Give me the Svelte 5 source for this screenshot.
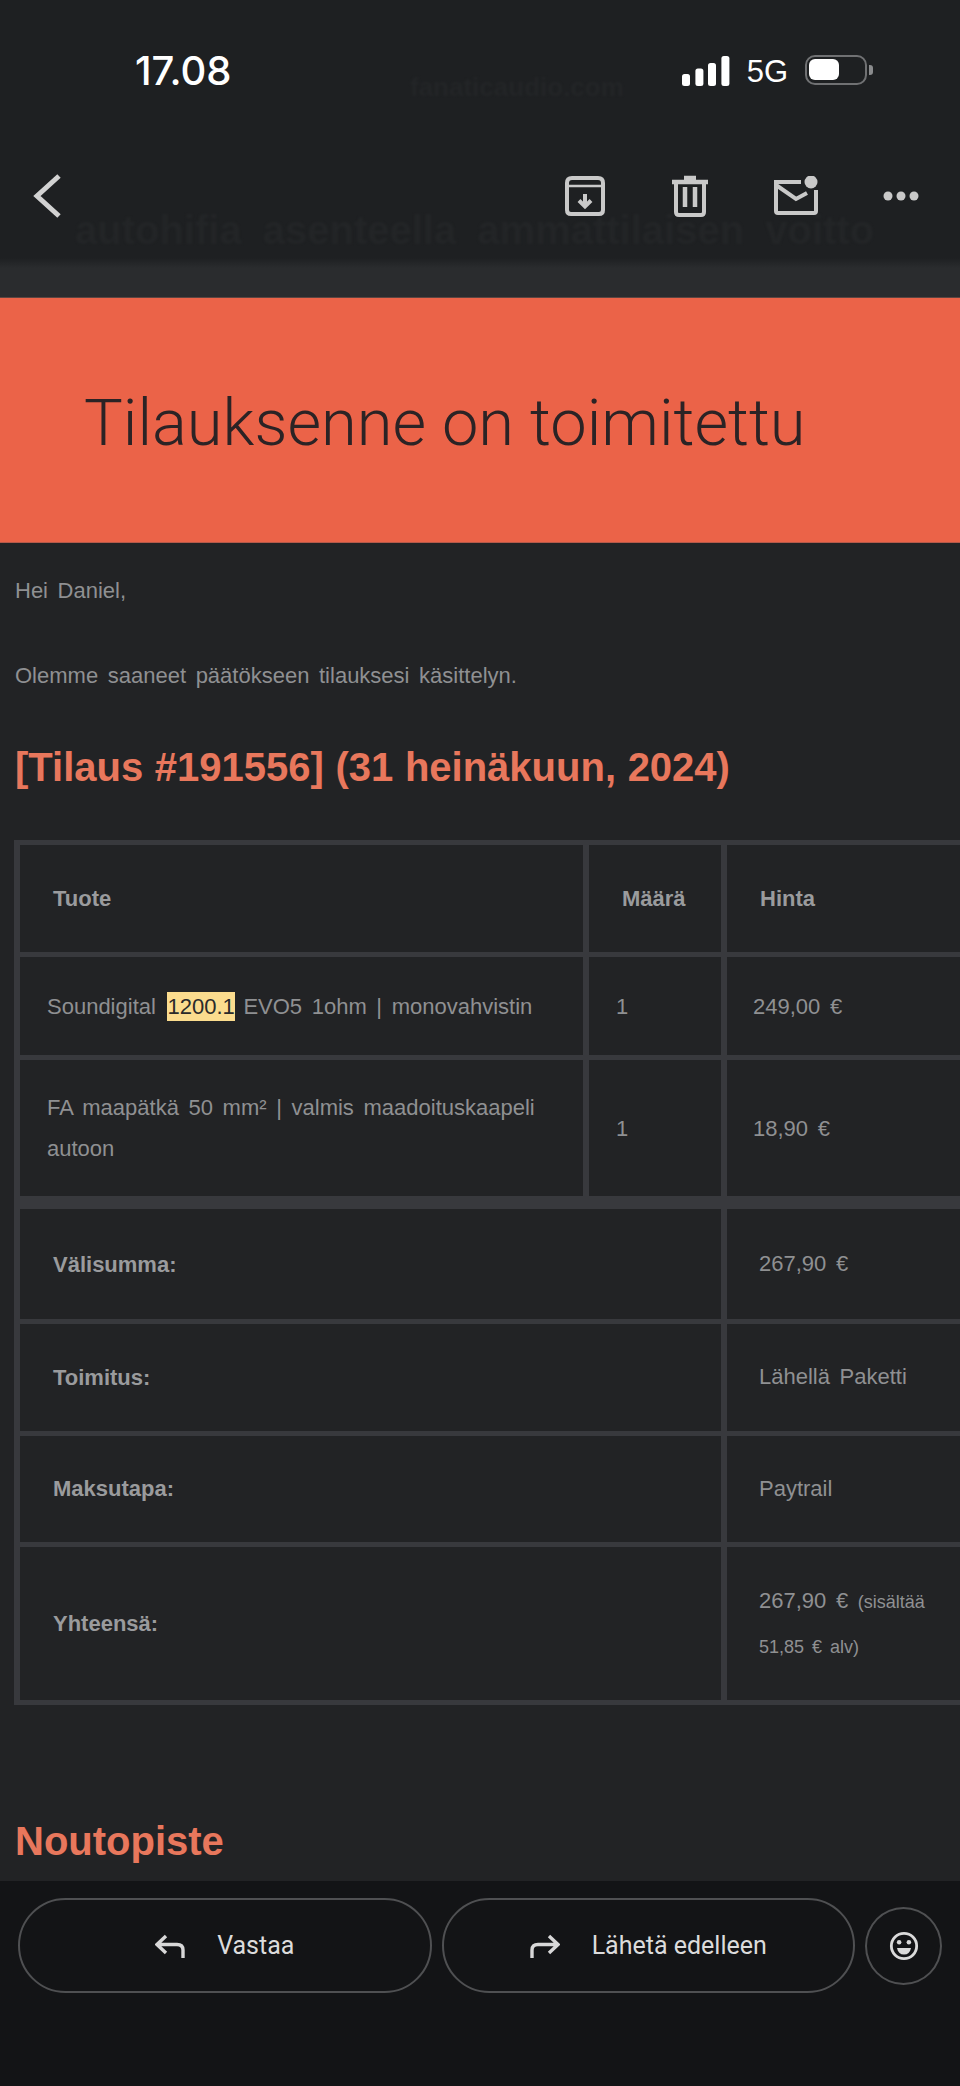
<script>
  const items = [
    { name: 'Soundigital', hit: '1200.1', rest: 'EVO5 1ohm | monovahvistin', qty: 1, price: '249,00 €' },
    { name: 'FA maapätkä 50 mm² | valmis maadoituskaapeli autoon', qty: 1, price: '18,90 €' }
  ]
  const totals = [
    { label: 'Välisumma:', value: '267,90 €' },
    { label: 'Toimitus:', value: 'Lähellä Paketti' },
    { label: 'Maksutapa:', value: 'Paytrail' }
  ]
</script>

<div class="phone">
  <header class="top">
    <div class="ghost">
      <span class="ghost-site">fanaticaudio.com</span>
      <span class="ghost-line">autohifia asenteella ammattilaisen voitto</span>
    </div>
    <div class="status">
      <span class="time">17.08</span>
      <div class="status-right">
        <svg class="signal" width="48" height="30" viewBox="0 0 48 30" fill="#fff">
          <rect x="0" y="18" width="8" height="12" rx="2.5" />
          <rect x="13.4" y="12.5" width="8" height="17.5" rx="2.5" />
          <rect x="26" y="7" width="8" height="23" rx="2.5" />
          <rect x="39.4" y="0" width="8" height="30" rx="2.5" />
        </svg>
        <span class="net">5G</span>
        <div class="battery"><div class="charge"></div></div>
        <div class="nub"></div>
      </div>
    </div>
    <div class="toolbar">
      <svg class="back" width="30" height="46" viewBox="0 0 30 46" fill="none" stroke="#d2d2d2" stroke-width="5">
        <path d="M26 3 L4 23 L26 43" />
      </svg>
      <div class="actions">
        <svg width="42" height="42" viewBox="0 0 42 42" fill="none" stroke="#c9c9c9" stroke-width="4">
          <path d="M3 8 Q3 3 8 3 H34 Q39 3 39 8 V35 Q39 39 35 39 H7 Q3 39 3 35 Z" />
          <path d="M3 11 H39" stroke-width="2.5" />
          <path d="M21 19 V31 M15 25.5 L21 31.5 L27 25.5" stroke-width="4" />
        </svg>
        <svg width="38" height="42" viewBox="0 0 38 42" fill="none" stroke="#c9c9c9">
          <path d="M1 7 H37 M13 3 H25" stroke-width="4.5" />
          <path d="M5 8 V37 Q5 40 8 40 H30 Q33 40 33 37 V8" stroke-width="4" />
          <path d="M14 12 V32 M24 12 V32" stroke-width="4.5" />
        </svg>
        <svg width="46" height="40" viewBox="0 0 46 40" fill="none" stroke="#c9c9c9" stroke-width="4">
          <path d="M28 6 H3 V35 Q3 37 5 37 H41 Q43 37 43 35 V14" />
          <path d="M3 9 L23 23 L34 17" />
          <circle cx="38" cy="6" r="6.5" fill="#c9c9c9" stroke="none" />
        </svg>
        <svg width="36" height="10" viewBox="0 0 36 10" fill="#c9c9c9">
          <circle cx="5" cy="5" r="4.5" />
          <circle cx="18" cy="5" r="4.5" />
          <circle cx="31" cy="5" r="4.5" />
        </svg>
      </div>
    </div>
  </header>

  <main class="mail">
    <div class="banner">
      <h1>Tilauksenne on toimitettu</h1>
    </div>
    <p class="hello">Hei Daniel,</p>
    <p class="intro">Olemme saaneet päätökseen tilauksesi käsittelyn.</p>
    <h2 class="order">[Tilaus #191556] (31 heinäkuun, 2024)</h2>

    <table>
      <thead>
        <tr>
          <th class="c1">Tuote</th>
          <th class="c2">Määrä</th>
          <th class="c3">Hinta</th>
        </tr>
      </thead>
      <tbody>
        {#each items as item}
          <tr>
            <td class="c1">
              {item.name}
              {#if item.hit}<mark>{item.hit}</mark> {item.rest}{/if}
            </td>
            <td class="c2">{item.qty}</td>
            <td class="c3">{item.price}</td>
          </tr>
        {/each}
      </tbody>
      <tfoot>
        {#each totals as row}
          <tr>
            <th colspan="2">{row.label}</th>
            <td class="total">{row.value}</td>
          </tr>
        {/each}
        <tr class="grand">
          <th colspan="2">Yhteensä:</th>
          <td class="total">267,90 € <small>(sisältää 51,85 € alv)</small></td>
        </tr>
      </tfoot>
    </table>

    <h2 class="pickup">Noutopiste</h2>
  </main>

  <footer class="bottom">
    <button class="pill">
      <svg width="30" height="24" viewBox="0 0 30 24" fill="none" stroke="#d8d8d8" stroke-width="3.4">
        <path d="M11 2 L2 10.5 L11 19 M2 10.5 H22 Q28 10.5 28 16 V24" />
      </svg>
      <span>Vastaa</span>
    </button>
    <button class="pill">
      <svg width="30" height="24" viewBox="0 0 30 24" fill="none" stroke="#d8d8d8" stroke-width="3.4">
        <path d="M19 2 L28 10.5 L19 19 M28 10.5 H8 Q2 10.5 2 16 V24" />
      </svg>
      <span>Lähetä edelleen</span>
    </button>
    <button class="round">
      <svg width="30" height="30" viewBox="0 0 32 32">
        <circle cx="16" cy="16" r="13.5" fill="none" stroke="#dadada" stroke-width="3" />
        <circle cx="10.8" cy="12" r="2.4" fill="#dadada" />
        <circle cx="21.2" cy="12" r="2.4" fill="#dadada" />
        <path d="M8.5 18 H23.5 Q22 25 16 25 Q10 25 8.5 18 Z" fill="#dadada" />
      </svg>
    </button>
  </footer>
</div>

<style>
  :global(body) {
    margin: 0;
    background: #222325;
  }
  .phone {
    width: 960px;
    height: 2086px;
    display: flex;
    flex-direction: column;
    overflow: hidden;
    background: #222325;
    font-family: "Liberation Sans", Arial, sans-serif;
  }

  /* top bar */
  .top {
    position: relative;
    height: 298px;
    flex-shrink: 0;
    box-sizing: border-box;
    background: linear-gradient(#1e2022 0, #1e2022 258px, #2a2c2e 268px, #2a2c2e 100%);
    border-bottom: 1px solid #5d4541;
  }
  .ghost {
    position: absolute;
    inset: 0;
    overflow: hidden;
    white-space: nowrap;
    font-weight: 700;
    color: #232527;
    filter: blur(1px);
  }
  .ghost-site {
    position: absolute;
    left: 410px;
    top: 72px;
    font-size: 26px;
  }
  .ghost-line {
    position: absolute;
    left: 75px;
    top: 208px;
    font-size: 40px;
    word-spacing: 10px;
  }
  .status {
    position: relative;
    height: 142px;
    box-sizing: border-box;
    padding: 53px 87px 0 135px;
    display: flex;
    justify-content: space-between;
    align-items: flex-start;
    color: #fff;
  }
  .time {
    font-family: Inter, "Liberation Sans", sans-serif;
    font-size: 40px;
    font-weight: 500;
    line-height: 36px;
  }
  .status-right {
    display: flex;
    align-items: center;
    height: 32px;
    margin-top: 1px;
  }
  .signal {
    margin-top: 2px;
  }
  .net {
    font-size: 31px;
    line-height: 32px;
    margin-left: 17px;
    margin-top: 3px;
  }
  .battery {
    box-sizing: border-box;
    width: 62px;
    height: 30px;
    margin-left: 17px;
    padding: 2px;
    border: 2.5px solid #707173;
    border-radius: 10px;
  }
  .charge {
    width: 30px;
    height: 21px;
    border-radius: 6px;
    background: #fff;
  }
  .nub {
    width: 4px;
    height: 10px;
    margin-left: 2px;
    border-radius: 0 3px 3px 0;
    background: #8a8b8d;
  }
  .toolbar {
    position: relative;
    display: flex;
    align-items: center;
    justify-content: space-between;
    height: 108px;
    padding: 0 41px 0 33px;
  }
  .actions {
    display: flex;
    align-items: center;
    gap: 64px;
  }
  .actions svg:nth-child(2) {
    margin-left: 1px;
  }

  /* email body */
  .mail {
    flex: 1;
    min-height: 0;
    overflow: hidden;
    color: #8f9092;
    font-size: 22px;
    word-spacing: 3.5px;
  }
  .banner {
    height: 245px;
    box-sizing: border-box;
    padding: 87px 0 0 84px;
    background: #eb6348;
    border-bottom: 1px solid #b5594a;
  }
  h1 {
    margin: 0;
    font-family: Roboto, "Liberation Sans", sans-serif;
    font-size: 65px;
    font-weight: 300;
    line-height: 76px;
    color: #2b2325;
    word-spacing: 0;
  }
  p {
    margin: 0;
    padding-left: 15px;
    line-height: 30px;
  }
  .hello {
    padding-top: 33px;
  }
  .intro {
    padding-top: 55px;
  }
  h2 {
    margin: 0;
    padding-left: 15px;
    font-size: 40px;
    font-weight: 700;
    line-height: 46px;
    color: #e8775c;
    word-spacing: 0.5px;
  }
  .order {
    margin-top: 53px;
  }

  /* order table */
  table {
    margin: 50px 0 0 14px;
    width: 980px;
    table-layout: fixed;
    border-collapse: separate;
    border-spacing: 6px 5.5px;
    background: #38393d;
  }
  th,
  td {
    background: #222325;
    text-align: left;
    padding: 0 0 0 33px;
    line-height: 41px;
    vertical-align: middle;
  }
  th {
    font-weight: 700;
    color: #9a9b9d;
    word-spacing: 0;
  }
  tbody td {
    padding-left: 27px;
  }
  tbody td.c3 {
    padding-left: 26px;
  }
  .c1 {
    width: 530px;
  }
  .c2 {
    width: 99px;
  }
  thead th {
    height: 107px;
  }
  tbody tr:first-child td {
    height: 98px;
  }
  tbody tr:last-child td {
    height: 136px;
  }
  tfoot tr:first-child th,
  tfoot tr:first-child td {
    height: 110px;
    border-top: 8px solid #38393d;
  }
  tfoot th,
  tfoot td {
    height: 106.5px;
  }
  tfoot .grand th,
  tfoot .grand td {
    height: 153px;
  }
  .total {
    padding-left: 32px;
    line-height: 44px;
    padding-right: 40px;
  }
  small {
    font-size: 18px;
    word-spacing: 3px;
  }
  mark {
    margin: 0 -1px 0 2px;
    padding: 2px 0;
    background: #fbdc8e;
    color: #2a2a2a;
  }
  .pickup {
    margin-top: 113px;
  }

  /* reply bar */
  .bottom {
    height: 205px;
    flex-shrink: 0;
    box-sizing: border-box;
    padding: 17px 18px 0;
    display: flex;
    align-items: flex-start;
    gap: 10px;
    background: #131416;
  }
  .pill {
    flex: 1;
    height: 95px;
    display: flex;
    align-items: center;
    justify-content: center;
    gap: 32px;
    padding: 0;
    background: none;
    border: 2px solid #4f5052;
    border-radius: 48px;
    color: #dcdcdc;
    font-family: Roboto, "Liberation Sans", sans-serif;
    font-size: 25px;
    font-weight: 400;
  }
  .round {
    flex-shrink: 0;
    width: 77px;
    height: 78px;
    margin-top: 9px;
    display: flex;
    align-items: center;
    justify-content: center;
    padding: 0;
    background: none;
    border: 2px solid #4f5052;
    border-radius: 50%;
  }
</style>
